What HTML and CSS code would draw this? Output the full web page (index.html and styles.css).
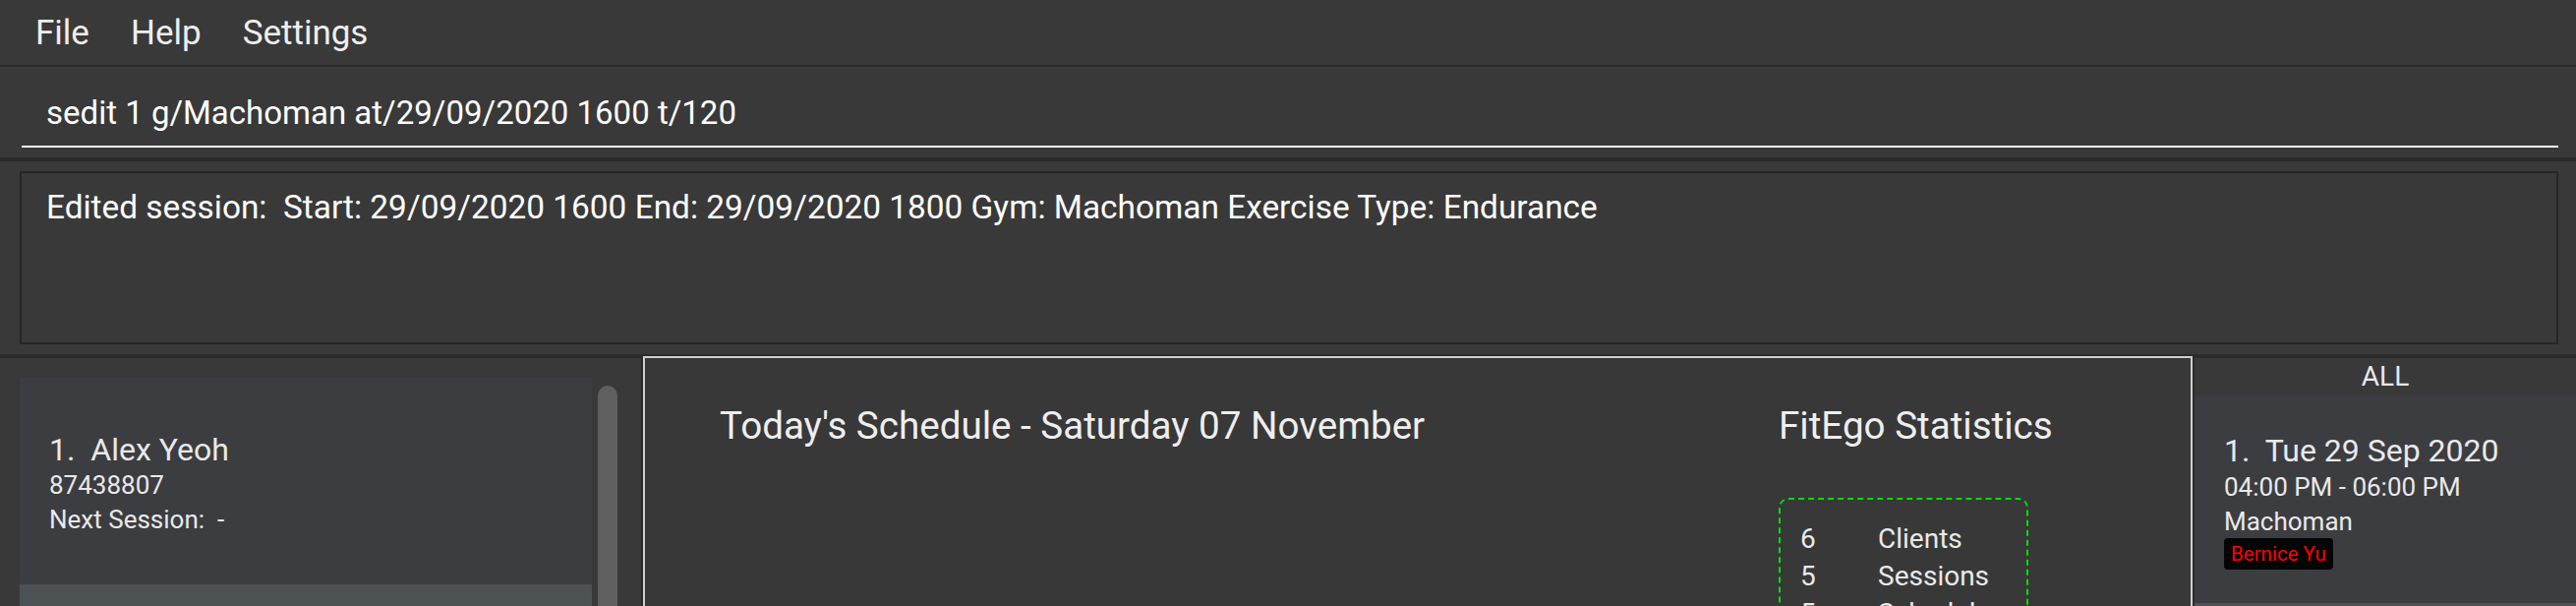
FILE: index.html
```html
<!DOCTYPE html>
<html>
<head>
<meta charset="utf-8">
<link rel="stylesheet" href="styles.css">
</head>
<body>
<div class="app">
  <nav class="menubar">
    <span class="menu-item">File</span>
    <span class="menu-item">Help</span>
    <span class="menu-item">Settings</span>
  </nav>
  <section class="command">
    <div class="command-field">sedit 1 g/Machoman at/29/09/2020 1600 t/120</div>
  </section>
  <section class="result">
    <div class="result-box">Edited session:  Start: 29/09/2020 1600 End: 29/09/2020 1800 Gym: Machoman Exercise Type: Endurance</div>
  </section>
  <main class="panels">
    <aside class="client-panel">
      <div class="client-list">
        <div class="client-card">
          <div class="card-title">1.  Alex Yeoh</div>
          <div class="card-line">87438807</div>
          <div class="card-line">Next Session:  -</div>
        </div>
        <div class="client-card next"></div>
      </div>
      <div class="scrollbar"><div class="thumb"></div></div>
    </aside>
    <section class="center-panel">
      <div class="schedule">
        <h2 class="heading">Today's Schedule - Saturday 07 November</h2>
      </div>
      <div class="stats">
        <h2 class="heading">FitEgo Statistics</h2>
        <div class="stats-box">
          <div class="stat-row"><span class="num">6</span><span class="label">Clients</span></div>
          <div class="stat-row"><span class="num">5</span><span class="label">Sessions</span></div>
          <div class="stat-row"><span class="num">5</span><span class="label">Schedules</span></div>
        </div>
      </div>
    </section>
    <aside class="session-panel">
      <div class="session-header">ALL</div>
      <div class="session-card">
        <div class="s-title">1.  Tue 29 Sep 2020</div>
        <div class="s-line">04:00 PM - 06:00 PM</div>
        <div class="s-line gym">Machoman</div>
        <div class="tags"><span class="tag">Bernice Yu</span></div>
      </div>
      <div class="session-card next"></div>
    </aside>
  </main>
</div>
</body>
</html>
```
FILE: styles.css
```css
* { box-sizing: border-box; margin: 0; padding: 0; }
html, body {
  width: 2620px;
  height: 616px;
  overflow: hidden;
  background: #393939;
}
body {
  font-family: Roboto, "Liberation Sans", sans-serif;
  color: #e9e9e9;
}
.app {
  display: flex;
  flex-direction: column;
  height: 616px;
}
.menubar {
  height: 68px;
  display: flex;
  align-items: flex-start;
  padding-left: 15px;
  border-bottom: 2px solid #2b2b2b;
  background: #393939;
}
.menu-item {
  font-size: 35px;
  line-height: 67px;
  padding: 0 21px;
  color: #eeeeee;
}
.command {
  padding: 27px 18px 10px 22px;
  border-bottom: 4px solid #2b2b2b;
  height: 96px;
}
.command-field {
  font-size: 33px;
  line-height: 40px;
  padding: 0 0 13px 25px;
  border-bottom: 2px solid #ffffff;
  color: #ffffff;
  white-space: pre;
}
.result {
  height: 198px;
  padding: 10px 18px 10px 20px;
  border-bottom: 2px solid #2b2b2b;
}
.result-box {
  height: 176px;
  border: 2px solid #262626;
  padding: 15px 25px;
  font-size: 33.4px;
  line-height: 40px;
  color: #ffffff;
  white-space: pre;
}
.panels {
  flex: 1;
  display: flex;
  min-height: 0;
}
.client-panel {
  width: 654px;
  border-top: 2px solid #2b2b2b;
  border-right: 2px solid #2b2b2b;
  display: flex;
  padding: 20px 0 0 20px;
}
.client-list {
  width: 582px;
  display: flex;
  flex-direction: column;
}
.client-card {
  background: #3c3d40;
  height: 210px;
  padding: 54px 30px 0 30px;
  flex-shrink: 0;
}
.client-card.next { background: #4c5154; }
.card-title { font-size: 32px; line-height: 38px; white-space: pre; }
.card-line { font-size: 26px; line-height: 35px; white-space: pre; }
.scrollbar {
  width: 20px;
  margin: 8px 0 0 6px;
}
.thumb {
  height: 400px;
  background: #5f5f5f;
  border-radius: 10px;
}
.center-panel {
  flex: 1;
  border: 2px solid #d0d0d0;
  border-bottom: none;
  background: #383838;
  display: flex;
  padding: 45px 0 0 76px;
}
.heading {
  font-weight: normal;
  font-size: 38.6px;
  line-height: 48px;
  color: #eeeeee;
}
.schedule { width: 1077px; }
.stats { display: flex; flex-direction: column; }
.stats-box {
  margin-top: 49px;
  width: 254px;
  border: 2px dashed #00e000;
  border-radius: 10px;
  padding: 21px 0 0 20px;
}
.stat-row { display: flex; font-size: 28px; line-height: 38px; }
.num { width: 79px; }
.session-panel {
  width: 390px;
  border-top: 2px solid #2b2b2b;
  border-left: 2px solid #2b2b2b;
  display: flex;
  flex-direction: column;
}
.session-header {
  height: 39px;
  text-align: center;
  font-size: 28px;
  line-height: 38px;
  background: #393939;
}
.session-card {
  background: #3c3d40;
  height: 211px;
  padding: 36px 30px 0 30px;
  flex-shrink: 0;
}
.session-card.next { background: #4c5154; }
.s-title { font-size: 32px; line-height: 40px; white-space: pre; }
.s-line { font-size: 26px; line-height: 35px; }
.s-line.gym { line-height: 34px; }
.tags { display: flex; }
.tag {
  background: #050505;
  color: #ff0000;
  font-size: 20.5px;
  line-height: 26px;
  padding: 3px 7px;
  border-radius: 4px;
}
```
